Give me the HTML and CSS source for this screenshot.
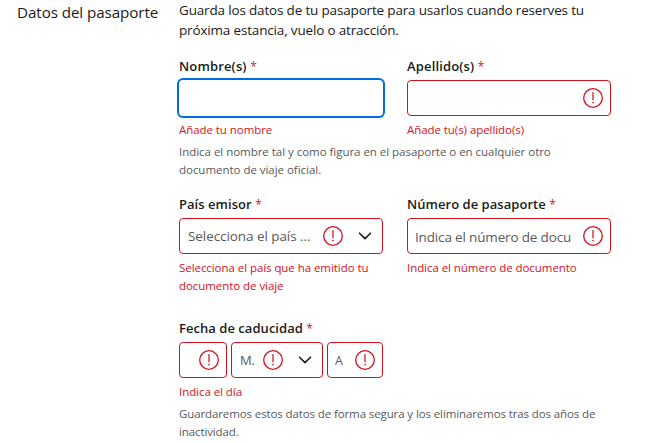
FILE: index.html
```html
<!DOCTYPE html>
<html lang="es">
<head>
<meta charset="utf-8">
<title>Datos del pasaporte</title>
<link rel="stylesheet" href="styles.css">
</head>
<body>
<svg class="defs" width="0" height="0">
  <symbol id="alert" viewBox="0 0 20 20"><circle cx="10" cy="10" r="9.3" fill="none" stroke="currentColor" stroke-width="1.3"/><path d="M10 4.600v7.200" stroke="currentColor" stroke-width="1.250" stroke-linecap="round"/><circle cx="10" cy="14.500" r=".85" fill="currentColor"/></symbol>
  <symbol id="chevron" viewBox="0 0 14 8"><path d="M1.500 1.200 7 6.600l5.500-5.400" fill="none" stroke="currentColor" stroke-width="1.6" stroke-linecap="round" stroke-linejoin="round"/></symbol>
</svg>
<main class="section">
  <h2 class="title">Datos del pasaporte</h2>
  <form class="form">
    <p class="intro">Guarda los datos de tu pasaporte para usarlos cuando reserves tu<br>próxima estancia, vuelo o atracción.</p>
    <div class="row names">
      <div class="field">
        <label class="label">Nombre(s) <span class="req">*</span></label>
        <div class="control focus"></div>
        <p class="error">Añade tu nombre</p>
      </div>
      <div class="field">
        <label class="label">Apellido(s) <span class="req">*</span></label>
        <div class="control"><span class="text"></span><svg class="alert"><use href="#alert"/></svg></div>
        <p class="error">Añade tu(s) apellido(s)</p>
      </div>
    </div>
    <p class="hint">Indica el nombre tal y como figura en el pasaporte o en cualquier otro<br>documento de viaje oficial.</p>
    <div class="row document">
      <div class="field">
        <label class="label">País emisor <span class="req">*</span></label>
        <div class="control select"><span class="text">Selecciona el país ...</span><svg class="alert"><use href="#alert"/></svg><svg class="chevron"><use href="#chevron"/></svg></div>
        <p class="error">Selecciona el país que ha emitido tu<br>documento de viaje</p>
      </div>
      <div class="field">
        <label class="label">Número de pasaporte <span class="req">*</span></label>
        <div class="control number"><span class="text">Indica el número de docu</span><svg class="alert"><use href="#alert"/></svg></div>
        <p class="error">Indica el número de documento</p>
      </div>
    </div>
    <div class="expiry">
      <label class="label">Fecha de caducidad <span class="req">*</span></label>
      <div class="date">
        <div class="control day"><span class="text"></span><svg class="alert"><use href="#alert"/></svg></div>
        <div class="control select month"><span class="text">M.</span><svg class="alert"><use href="#alert"/></svg><svg class="chevron"><use href="#chevron"/></svg></div>
        <div class="control year"><span class="text">A</span><svg class="alert"><use href="#alert"/></svg></div>
      </div>
      <p class="error">Indica el día</p>
    </div>
    <p class="hint privacy">Guardaremos estos datos de forma segura y los eliminaremos tras dos años de<br>inactividad.</p>
  </form>
</main>
</body>
</html>
```
FILE: styles.css
```css
* { box-sizing: border-box; }
body { margin: 0; background: #fff; color: #1a1a1a; font: 13.5px/20px "Open Sans", "Noto Sans", sans-serif; overflow: hidden; }
p, h2 { margin: 0; }
.defs { position: absolute; }
.section { display: grid; grid-template-columns: 162px 432px; padding: 0 0 0 17px; }
.title { font-size: 15.2px; font-weight: 400; line-height: 24px; letter-spacing: -.08px; white-space: nowrap; }
.form { white-space: nowrap; }
.intro { font-size: 13.5px; line-height: 20px; letter-spacing: -.17px; }
.row { display: grid; grid-template-columns: 204px 204px; column-gap: 24px; }
.names { margin-top: 16px; }
.label { display: block; height: 24px; line-height: 20px; font-size: 13px; font-weight: 600; letter-spacing: .04px; }
.names .label { letter-spacing: .15px; }
.req { color: #d4111e; font-size: 12px; font-weight: 400; }
.control { height: 36px; border: 1px solid #d4111e; border-radius: 4px; display: flex; align-items: center; padding: 0 7px; color: #595959; }
.focus { border-color: transparent; box-shadow: 0 0 0 2px #006ce4; }
.text { flex: 1; min-width: 0; }
.number .text { padding-top: 2px; letter-spacing: -.16px; }
.year .text { padding-top: 2px; font-size: 12.5px; }
.alert { width: 20px; height: 20px; flex: none; margin-left: 12px; color: #d4111e; }
.chevron { width: 14px; height: 8px; flex: none; margin: 0 3px 0 15px; color: #1a1a1a; }
.select .text { padding-left: 1px; letter-spacing: -.07px; }
.month .text { font-size: 13px; }
.month .alert { margin-left: 6px; }
.error, .hint { font-size: 11.5px; line-height: 18px; }
.error { color: #d4111e; letter-spacing: -.06px; padding-top: 5px; margin-bottom: -1px; }
.hint { color: #595959; padding-top: 5px; letter-spacing: -.03px; }
.privacy { letter-spacing: -.11px; }
.document { margin-top: 15px; }
.expiry { margin-top: 24px; }
.date { display: flex; gap: 4px; }
.day { width: 48px; }
.month { width: 92px; }
.year { width: 56px; }
```
